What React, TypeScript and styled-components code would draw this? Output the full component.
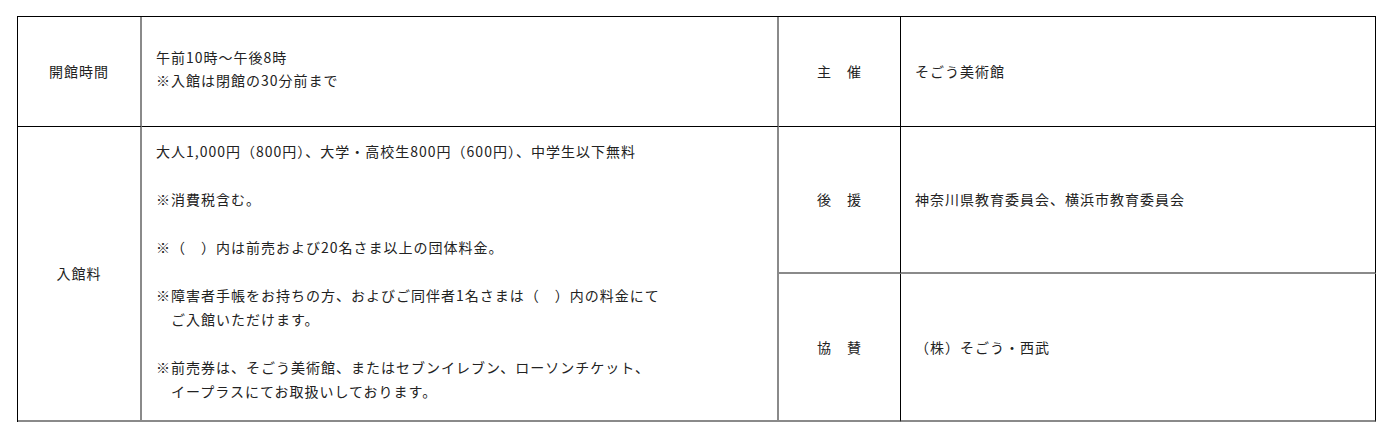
import styled, { createGlobalStyle } from "styled-components";

const GlobalStyle = createGlobalStyle`
    body {
        margin: 0;
        background: #fff;
        font-family: "Noto Sans CJK JP", "Noto Sans", sans-serif;
        color: #222;
    }
`;

const Page = styled.div`
    padding: 16px 0 0 17px;
`;

const InfoGrid = styled.div`
    display: grid;
    grid-template-columns: 124px 637px 122px 475px;
    grid-template-rows: 110px 147px 148px;
    width: max-content;
    border-top: 1px solid #000;
    border-left: 1px solid #000;
    font-size: 14px;
    letter-spacing: 1px;
    line-height: 23px;
`;

const Cell = styled.div<{ $soft?: boolean; $softBottom?: boolean; $span?: number }>`
    display: flex;
    flex-direction: column;
    justify-content: center;
    border-right: ${(p) => (p.$soft ? "2px solid #8a8a8a" : "1px solid #000")};
    border-bottom: ${(p) => (p.$softBottom ? "2px solid #8a8a8a" : "1px solid #000")};
    grid-row: ${(p) => (p.$span ? `span ${p.$span}` : "auto")};
`;

const Label = styled(Cell)`
    align-items: center;
    text-align: center;
`;

const Body = styled(Cell)`
    padding: 0 14px;
`;

const Hours = styled(Body)`
    padding-bottom: 5px;
`;

const Notes = styled(Body)`
    justify-content: flex-start;
    padding-top: 12px;
    line-height: 24px;
`;

const Note = styled.p`
    margin: 0 0 24px;
    white-space: pre-line;

    &:last-child {
        margin-bottom: 0;
    }
`;

const fees = [
    "大人1,000円（800円）、大学・高校生800円（600円）、中学生以下無料",
    "※消費税含む。",
    "※（　）内は前売および20名さま以上の団体料金。",
    "※障害者手帳をお持ちの方、およびご同伴者1名さまは（　）内の料金にて\n　ご入館いただけます。",
    "※前売券は、そごう美術館、またはセブンイレブン、ローソンチケット、\n　イープラスにてお取扱いしております。",
];

export default function App() {
    return (
        <>
            <GlobalStyle />
            <Page>
                <InfoGrid>
                    <Label $soft>開館時間</Label>
                    <Hours $soft>
                        <div>午前10時〜午後8時</div>
                        <div>※入館は閉館の30分前まで</div>
                    </Hours>
                    <Label>主　催</Label>
                    <Body>そごう美術館</Body>

                    <Label $soft $softBottom $span={2}>入館料</Label>
                    <Notes $soft $softBottom $span={2}>
                        {fees.map((f) => (
                            <Note key={f}>{f}</Note>
                        ))}
                    </Notes>
                    <Label $softBottom>後　援</Label>
                    <Body $softBottom>神奈川県教育委員会、横浜市教育委員会</Body>

                    <Label $softBottom>協　賛</Label>
                    <Body $softBottom>（株）そごう・西武</Body>
                </InfoGrid>
            </Page>
        </>
    );
}
